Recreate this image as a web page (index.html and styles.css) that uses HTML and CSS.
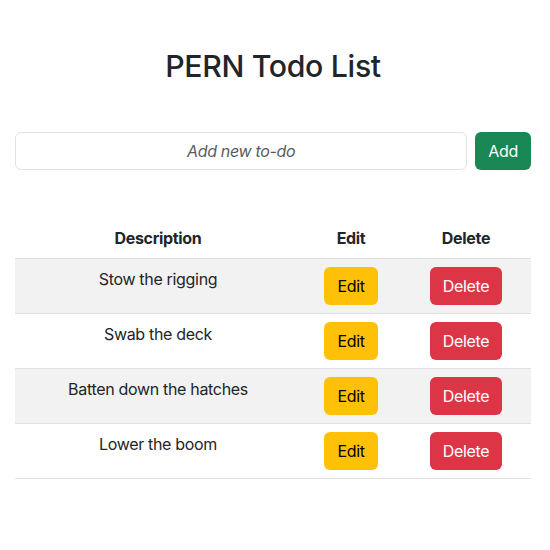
FILE: index.html
```html
<!DOCTYPE html>
<html lang="en">
<head>
<meta charset="utf-8">
<title>PERN Todo List</title>
<link rel="stylesheet" href="styles.css">
</head>
<body>
<div class="container">
  <h1 class="title">PERN Todo List</h1>
  <form class="add-form">
    <input class="todo-input" type="text" placeholder="Add new to-do">
    <button type="button" class="btn btn-success">Add</button>
  </form>
  <table class="todo-table">
    <colgroup>
      <col class="col-desc">
      <col class="col-edit">
      <col class="col-delete">
    </colgroup>
    <thead>
      <tr><th>Description</th><th>Edit</th><th>Delete</th></tr>
    </thead>
    <tbody>
      <tr><td>Stow the rigging</td><td><button class="btn btn-warning">Edit</button></td><td><button class="btn btn-danger">Delete</button></td></tr>
      <tr><td>Swab the deck</td><td><button class="btn btn-warning">Edit</button></td><td><button class="btn btn-danger">Delete</button></td></tr>
      <tr><td>Batten down the hatches</td><td><button class="btn btn-warning">Edit</button></td><td><button class="btn btn-danger">Delete</button></td></tr>
      <tr><td>Lower the boom</td><td><button class="btn btn-warning">Edit</button></td><td><button class="btn btn-danger">Delete</button></td></tr>
    </tbody>
  </table>
</div>
</body>
</html>
```
FILE: styles.css
```css
* { box-sizing: border-box; }
html, body { margin: 0; padding: 0; }
body {
  font-family: Inter, "Noto Sans", sans-serif;
  font-size: 16px;
  line-height: 1.5;
  letter-spacing: -0.02em;
  color: #212529;
  background: #fff;
}
.container {
  padding: 0 19px 0 15px;
}
.title {
  margin: 48px 0 0;
  text-align: center;
  font-size: 30.25px;
  font-weight: 500;
  line-height: 1.2;
}
.add-form {
  display: flex;
  gap: 8px;
  margin-top: 48px;
}
.todo-input {
  flex: 1;
  height: 38px;
  padding: 6px 12px;
  font-family: inherit;
  font-size: 16px;
  letter-spacing: inherit;
  color: #212529;
  text-align: center;
  border: 1px solid #dee2e6;
  border-radius: 6px;
  outline: none;
}
.todo-input::placeholder {
  color: #595c5f;
  font-style: italic;
}
.btn {
  height: 38px;
  padding: 6px 12px;
  font-family: inherit;
  font-size: 16px;
  line-height: 24px;
  letter-spacing: inherit;
  border: 1px solid transparent;
  border-radius: 6px;
  cursor: pointer;
}
.btn-success { background: #198754; color: #fff; }
.btn-warning { background: #ffc107; color: #000; }
.btn-danger { background: #dc3545; color: #fff; }
.todo-table {
  width: 100%;
  margin-top: 48px;
  border-collapse: collapse;
  table-layout: fixed;
  text-align: center;
}
.col-desc { width: 286px; }
.col-edit { width: 100px; }
.col-delete { width: 130px; }
.todo-table th,
.todo-table td {
  padding: 8px;
  vertical-align: top;
  border-bottom: 1px solid #dee2e6;
}
.todo-table th { font-weight: 700; }
.todo-table tbody tr:nth-child(odd) td { background: #f2f2f2; }
```
